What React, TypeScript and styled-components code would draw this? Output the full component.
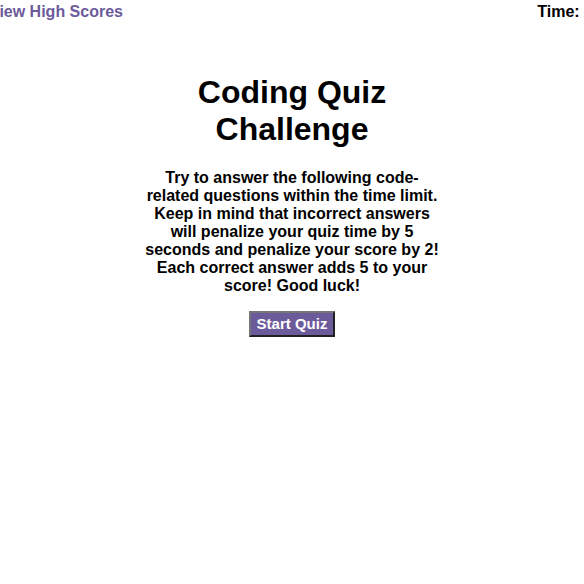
import styled, { createGlobalStyle } from 'styled-components'

const GlobalStyle = createGlobalStyle`
  body {
    margin: 0;
    font-family: "Liberation Sans", Arial, sans-serif;
    background: #ffffff;
    overflow: hidden;
  }
`

const Header = styled.header`
  display: flex;
  justify-content: space-between;
  align-items: center;
  margin: 0 -9px 0 -11px;
  padding-top: 3px;
  font-weight: bold;
  font-size: 16px;
`

const ScoresLink = styled.a`
  color: #6c5b9b;
  text-decoration: none;
`

const Timer = styled.div`
  color: #000;
  white-space: nowrap;
`

const Main = styled.main`
  width: 300px;
  margin: 53px auto 0;
  text-align: center;
`

const Title = styled.h1`
  font-size: 32px;
  line-height: 37px;
  margin: 0 0 21px;
`

const Intro = styled.p`
  font-size: 16px;
  font-weight: bold;
  line-height: 18px;
  margin: 0 0 16px;
`

const StartButton = styled.button`
  font-family: "Liberation Sans", Arial, sans-serif;
  font-size: 15px;
  font-weight: bold;
  line-height: 18px;
  color: #fff;
  background: #6c5b9b;
  border: 2px outset #767676;
  padding: 2px 6px;
  cursor: pointer;
`

export default function App() {
  return (
    <>
      <GlobalStyle />
      <Header>
        <ScoresLink href="#">View High Scores</ScoresLink>
        <Timer>Time: 0</Timer>
      </Header>
      <Main>
        <Title>Coding Quiz Challenge</Title>
        <Intro>
          Try to answer the following code-related questions within the time limit. Keep in mind that
          incorrect answers will penalize your quiz time by 5 seconds and penalize your score by 2! Each
          correct answer adds 5 to your score! Good luck!
        </Intro>
        <StartButton>Start Quiz</StartButton>
      </Main>
    </>
  )
}
